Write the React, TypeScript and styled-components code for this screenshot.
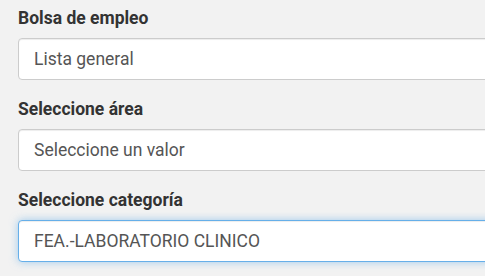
import React from "react";
import styled, { createGlobalStyle } from "styled-components";

const Global = createGlobalStyle`
  html, body { margin: 0; padding: 0; background: #f2f2f2; overflow: hidden; }
  body { font-family: Roboto, "Liberation Sans", sans-serif; }
`;

const Page = styled.div`
  padding: 7px 0 0 18px;
  width: 485px;
  height: 276px;
  box-sizing: border-box;
  overflow: hidden;
`;

const Group = styled.div`
  display: flex;
  flex-direction: column;
  margin-bottom: 18px;
`;

const Label = styled.label`
  font-size: 17.5px;
  font-weight: 700;
  line-height: 23px;
  color: #333;
  margin-bottom: 8px;
`;

const Field = styled.div<{ $focus?: boolean }>`
  width: 520px;
  height: 42px;
  box-sizing: border-box;
  background: #fff;
  border: 1px solid ${(p) => (p.$focus ? "#66afe9" : "#ccc")};
  border-radius: 4px;
  padding: 0 15px;
  display: flex;
  align-items: center;
  font-size: 17.5px;
  color: #555;
  box-shadow: ${(p) =>
    p.$focus
      ? "inset 0 1px 1px rgba(0,0,0,.075), 0 0 8px rgba(102,175,233,.6)"
      : "inset 0 1px 1px rgba(0,0,0,.075)"};
`;

export default function App() {
  return (
    <>
      <Global />
      <Page>
        <Group>
          <Label>Bolsa de empleo</Label>
          <Field>Lista general</Field>
        </Group>
        <Group>
          <Label>Seleccione área</Label>
          <Field>Seleccione un valor</Field>
        </Group>
        <Group>
          <Label>Seleccione categoría</Label>
          <Field $focus>FEA.-LABORATORIO CLINICO</Field>
        </Group>
      </Page>
    </>
  );
}
